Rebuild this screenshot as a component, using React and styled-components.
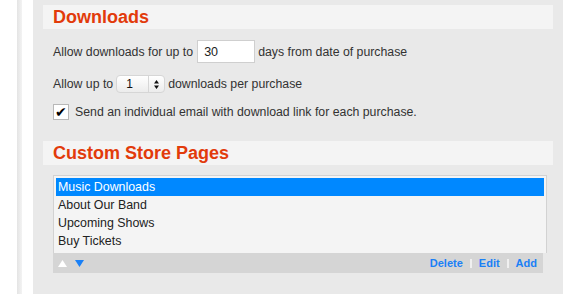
import React from "react";
import styled, { createGlobalStyle } from "styled-components";

const Global = createGlobalStyle`
  html, body { margin: 0; padding: 0; background: #fff; }
  body { font-family: "Liberation Sans", Arial, Helvetica, sans-serif; color: #333; }
`;

const Page = styled.div`
  display: flex;
  height: 294px;
  padding-left: 17px;
  overflow: hidden;
`;

const Rule = styled.div`
  width: 5px;
  background: linear-gradient(to right, #e4e4e4, #f3f3f3);
  margin-right: 11px;
`;

const Panel = styled.div`
  width: 530px;
  background: #e9e9e9;
  padding: 5px 10px 0;
  box-sizing: border-box;
`;

const SectionHead = styled.h2`
  margin: ${(p) => (p.$first ? "0" : "21px")} 0 0;
  height: 24px;
  background: #f4f4f4;
  padding-left: 10px;
  font-size: 18px;
  font-weight: bold;
  line-height: 25px;
  color: #e23b0b;
`;

const Body = styled.div`
  padding: 0 10px;
`;

const Row = styled.div`
  display: flex;
  align-items: center;
  font-size: 12.3px;
  margin-top: ${(p) => p.$mt}px;
  height: ${(p) => p.$h}px;
`;

const TextInput = styled.div`
  width: 50px;
  height: 21px;
  margin: 0 3px 0 4px;
  background: #fff;
  border: 1px solid #cfcfcf;
  padding-left: 6px;
  box-sizing: content-box;
  display: flex;
  align-items: center;
  font-size: 12.5px;
  color: #222;
`;

const Select = styled.div`
  width: 49px;
  height: 18px;
  margin: 0 3px 0 3px;
  border: 1px solid #d6d6d6;
  border-radius: 4px;
  background: linear-gradient(#ffffff, #ececec);
  display: flex;
  align-items: center;
  box-sizing: border-box;
  font-size: 12px;
  color: #111;
`;

const SelectValue = styled.span`
  flex: 1;
  padding-left: 9px;
`;

const SelectArrows = styled.span`
  width: 15px;
  height: 100%;
  border-left: 1px solid #d6d6d6;
  display: flex;
  align-items: center;
  justify-content: center;
`;

const Check = styled.span`
  width: 14px;
  height: 14px;
  border: 1px solid #b8b8b8;
  background: #fff;
  margin-right: 6px;
  display: flex;
  align-items: center;
  justify-content: center;
  font-size: 14px;
  line-height: 1;
  color: #000;
`;

const ListBox = styled.div`
  margin-top: 10px;
  width: 494px;
  border: 1px solid #d2d2d2;
  border-bottom: none;
  background: #f4f4f4;
  padding: 2px 2px 3px;
  box-sizing: border-box;
`;

const Item = styled.div`
  height: 18px;
  line-height: 18px;
  padding-left: 2px;
  font-size: 12.4px;
  color: ${(p) => (p.$selected ? "#fff" : "#222")};
  background: ${(p) => (p.$selected ? "#0088ff" : "transparent")};
`;

const Footer = styled.div`
  width: 490px;
  height: 20px;
  background: #d5d5d5;
  display: flex;
  align-items: center;
  padding: 0 6px 0 5px;
  box-sizing: border-box;
`;

const Arrows = styled.div`
  display: flex;
  gap: 8px;
  align-items: center;
  flex: 1;
`;

const Links = styled.div`
  display: flex;
  align-items: center;
  font-size: 11px;
  font-weight: bold;
`;

const LinkA = styled.a`
  color: #1a80f6;
  text-decoration: none;
`;

const Sep = styled.span`
  width: 2px;
  height: 9px;
  background: #f0f0f0;
  margin: 0 7px;
`;

export default function App() {
  return (
    <>
      <Global />
      <Page>
        <Rule />
        <Panel>
          <SectionHead $first>Downloads</SectionHead>
          <Body>
            <Row $mt={11} $h={23}>
              Allow downloads for up to
              <TextInput>30</TextInput>
              days from date of purchase
            </Row>
            <Row $mt={12} $h={18}>
              Allow up to
              <Select>
                <SelectValue>1</SelectValue>
                <SelectArrows>
                  <svg width="5" height="9" viewBox="0 0 5 9">
                    <path d="M2.5 0 L5 3.5 L0 3.5 Z M0 5.5 L5 5.5 L2.5 9 Z" fill="#111" />
                  </svg>
                </SelectArrows>
              </Select>
              downloads per purchase
            </Row>
            <Row $mt={11} $h={16}>
              <Check>✔</Check>
              Send an individual email with download link for each purchase.
            </Row>
          </Body>
          <SectionHead>Custom Store Pages</SectionHead>
          <Body>
            <ListBox>
              <Item $selected>Music Downloads</Item>
              <Item>About Our Band</Item>
              <Item>Upcoming Shows</Item>
              <Item>Buy Tickets</Item>
            </ListBox>
            <Footer>
              <Arrows>
                <svg width="9" height="7" viewBox="0 0 9 7">
                  <path d="M4.5 0 L9 7 L0 7 Z" fill="#fff" />
                </svg>
                <svg width="9" height="7" viewBox="0 0 9 7">
                  <path d="M0 0 L9 0 L4.5 7 Z" fill="#1a80f6" />
                </svg>
              </Arrows>
              <Links>
                <LinkA href="#">Delete</LinkA>
                <Sep />
                <LinkA href="#">Edit</LinkA>
                <Sep />
                <LinkA href="#">Add</LinkA>
              </Links>
            </Footer>
          </Body>
        </Panel>
      </Page>
    </>
  );
}
